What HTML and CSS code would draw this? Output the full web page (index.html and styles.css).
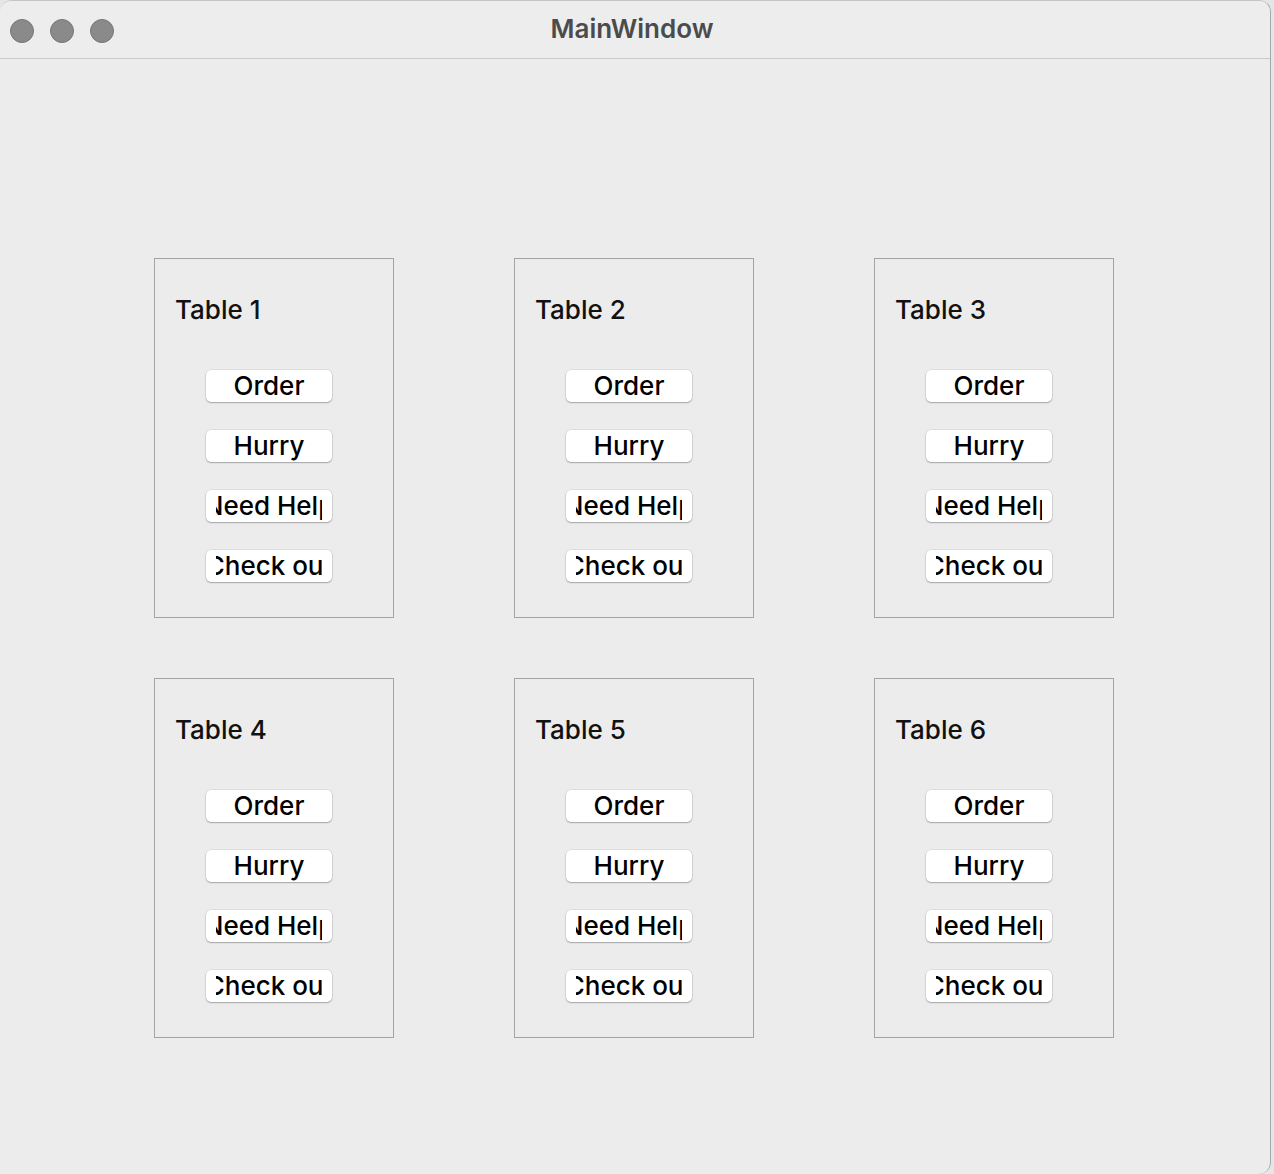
FILE: index.html
```html
<!DOCTYPE html>
<html>
<head>
<meta charset="utf-8">
<link rel="stylesheet" href="styles.css">
</head>
<body>
<div class="window">
  <div class="titlebar">
    <div class="lights"><span class="light"></span><span class="light"></span><span class="light"></span></div>
    <div class="title">MainWindow</div>
  </div>
  <div class="content">
    <div class="grid">
      <div class="table"><div class="name">Table 1</div><div class="btns"><div class="btn"><span>Order</span></div><div class="btn"><span>Hurry</span></div><div class="btn"><span>Need Help</span></div><div class="btn"><span>Check out</span></div></div></div>
      <div class="table"><div class="name">Table 2</div><div class="btns"><div class="btn"><span>Order</span></div><div class="btn"><span>Hurry</span></div><div class="btn"><span>Need Help</span></div><div class="btn"><span>Check out</span></div></div></div>
      <div class="table"><div class="name">Table 3</div><div class="btns"><div class="btn"><span>Order</span></div><div class="btn"><span>Hurry</span></div><div class="btn"><span>Need Help</span></div><div class="btn"><span>Check out</span></div></div></div>
      <div class="table"><div class="name">Table 4</div><div class="btns"><div class="btn"><span>Order</span></div><div class="btn"><span>Hurry</span></div><div class="btn"><span>Need Help</span></div><div class="btn"><span>Check out</span></div></div></div>
      <div class="table"><div class="name">Table 5</div><div class="btns"><div class="btn"><span>Order</span></div><div class="btn"><span>Hurry</span></div><div class="btn"><span>Need Help</span></div><div class="btn"><span>Check out</span></div></div></div>
      <div class="table"><div class="name">Table 6</div><div class="btns"><div class="btn"><span>Order</span></div><div class="btn"><span>Hurry</span></div><div class="btn"><span>Need Help</span></div><div class="btn"><span>Check out</span></div></div></div>
    </div>
  </div>
</div>
</body>
</html>
```
FILE: styles.css
```css
html, body {
  margin: 0;
  padding: 0;
  background: #e6e6e6;
}
body {
  width: 1274px;
  height: 1174px;
  overflow: hidden;
  font-family: Inter, "Liberation Sans", Arial, sans-serif;
}
.window {
  width: 1271px;
  height: 1174px;
  background: #ececec;
  border-right: 1px solid #a8a8a8;
  border-top: 1px solid #c4c4c4;
  border-radius: 12px 12px 12px 0;
  box-sizing: border-box;
  overflow: hidden;
}
.titlebar {
  height: 57px;
  border-bottom: 1px solid #c9c9c9;
  display: flex;
  align-items: center;
  position: relative;
  background: #ededed;
}
.lights {
  display: flex;
  gap: 16px;
  padding-left: 10px;
  margin-top: 2px;
}
.light {
  width: 22px;
  height: 22px;
  border-radius: 50%;
  background: #8a8a8a;
  border: 1px solid #767676;
}
.title {
  position: absolute;
  left: 0;
  right: 0;
  text-align: center;
  font-size: 26px;
  font-weight: 600;
  color: #4b4b4b;
  top: 12px;
  padding-right: 6px;
}
.content {
  padding: 199px 0 0 154px;
}
.grid {
  display: grid;
  grid-template-columns: repeat(3, 240px);
  grid-auto-rows: 360px;
  column-gap: 120px;
  row-gap: 60px;
}
.table {
  border: 1px solid #a3a3a3;
  box-sizing: border-box;
  padding: 36px 0 0 20px;
}
.name {
  font-size: 26px;
  font-weight: 500;
  line-height: 30px;
  color: #111;
  height: 75px;
}
.btns {
  display: flex;
  flex-direction: column;
  gap: 28px;
  padding-left: 31px;
}
.btn {
  width: 126px;
  height: 32px;
  background: #fff;
  border-radius: 5px;
  box-shadow: 0 0 0 0.5px rgba(0,0,0,0.12), 0 1px 1.5px rgba(0,0,0,0.25);
  display: flex;
  justify-content: center;
  align-items: center;
  box-sizing: border-box;
  padding: 0 10px;
}
.btn span {
  display: flex;
  justify-content: center;
  width: 106px;
  overflow: hidden;
  white-space: nowrap;
  font-size: 26px;
  font-weight: 500;
  line-height: 32px;
  color: #000;
}
```
